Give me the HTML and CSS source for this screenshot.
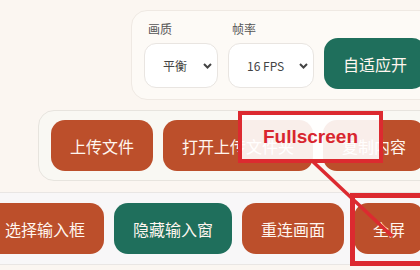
FILE: index.html
```html
<!DOCTYPE html>
<html lang="zh-CN">
<head>
    <meta charset="UTF-8">
    <meta name="viewport" content="width=device-width, initial-scale=1.0">
    <title>远程画面控制</title>
    <link rel="stylesheet" href="styles.css">
</head>
<body>
    <div class="panel settings">
        <div class="field">
            <label>画质</label>
            <div class="select quality">
                <span>平衡</span>
                <svg width="9" height="6" viewBox="0 0 9 6"><path d="M1 1l3.5 3.5L8 1" fill="none" stroke="#444" stroke-width="2"/></svg>
            </div>
        </div>
        <div class="field">
            <label>帧率</label>
            <div class="select fps">
                <span>16 FPS</span>
                <svg width="9" height="6" viewBox="0 0 9 6"><path d="M1 1l3.5 3.5L8 1" fill="none" stroke="#444" stroke-width="2"/></svg>
            </div>
        </div>
        <button class="btn green">自适应开</button>
    </div>

    <div class="panel files">
        <button class="btn">上传文件</button>
        <button class="btn">打开上传文件夹</button>
        <button class="btn">复制内容</button>
    </div>

    <div class="toolbar">
        <button class="btn">选择输入框</button>
        <button class="btn green">隐藏输入窗</button>
        <button class="btn">重连画面</button>
        <button class="btn">全屏</button>
    </div>

    <!-- 标注 -->
    <div class="mark-target"></div>
    <svg class="mark-line" width="420" height="270"><line x1="309" y1="158" x2="392" y2="236" stroke="#dc2a30" stroke-width="3.5"/></svg>
    <div class="mark-label">Fullscreen</div>
</body>
</html>
```

FILE: styles.css
```css
body {
    margin: 0;
    width: 420px;
    height: 270px;
    overflow: hidden;
    position: relative;
    background-color: #fbf6f1;
    font-family: "Noto Sans CJK SC", "Liberation Sans", sans-serif;
    color: #444;
}

.panel {
    display: flex;
    gap: 10px;
    width: max-content;
}

.settings {
    margin: 10px 0 0 131px;
    padding: 10px 12px 10px 12px;
    align-items: flex-end;
    background-color: #fdfaf6;
    border: 1px solid #efe9e3;
    border-radius: 16px;
}

.field label {
    display: block;
    font-size: 12px;
    line-height: 16px;
    color: #555;
    padding-left: 4px;
    margin-bottom: 6px;
}

.select {
    display: flex;
    align-items: center;
    justify-content: space-between;
    box-sizing: border-box;
    height: 45px;
    padding: 0 5px 0 18px;
    background-color: #fff;
    border: 1px solid #e9e5e1;
    border-radius: 12px;
    font-size: 12px;
    color: #444;
    white-space: nowrap;
    margin-bottom: 1px;
}

.select svg {
    flex-shrink: 0;
}

.quality {
    width: 74px;
}

.fps {
    width: 86px;
}

.btn {
    height: 51px;
    padding: 0 19px;
    border: none;
    border-radius: 14px;
    background-color: #bc4f2b;
    color: #fff6ef;
    font-family: "Noto Sans CJK SC", sans-serif;
    font-size: 16px;
    white-space: nowrap;
    flex-shrink: 0;
}

.btn.green {
    background-color: #1f6f5c;
}

.files {
    margin: 10px 0 0 38px;
    padding: 9px 12px;
    background-color: #f9f8f3;
    border: 1px solid #e7e4de;
    border-radius: 16px;
}

.toolbar {
    display: flex;
    gap: 10px;
    width: max-content;
    margin: 11px 0 0 -26px;
    padding: 10px 12px;
    background-color: #f8f7f8;
    border-top: 1px solid #e9e6e4;
    border-bottom: 1px solid #e9e6e4;
}

.mark-target {
    position: absolute;
    left: 350px;
    top: 193px;
    width: 90px;
    height: 73px;
    box-sizing: border-box;
    border: 5px solid #dc2a30;
}

.mark-line {
    position: absolute;
    left: 0;
    top: 0;
}

.mark-label {
    position: absolute;
    left: 238px;
    top: 111px;
    width: 145px;
    height: 52px;
    box-sizing: border-box;
    border: 4px solid #dc2a30;
    background-color: rgba(255, 255, 255, 0.9);
    color: #d8262f;
    font-family: "Liberation Sans", sans-serif;
    font-weight: bold;
    font-size: 19px;
    line-height: 44px;
    text-align: center;
}
```
